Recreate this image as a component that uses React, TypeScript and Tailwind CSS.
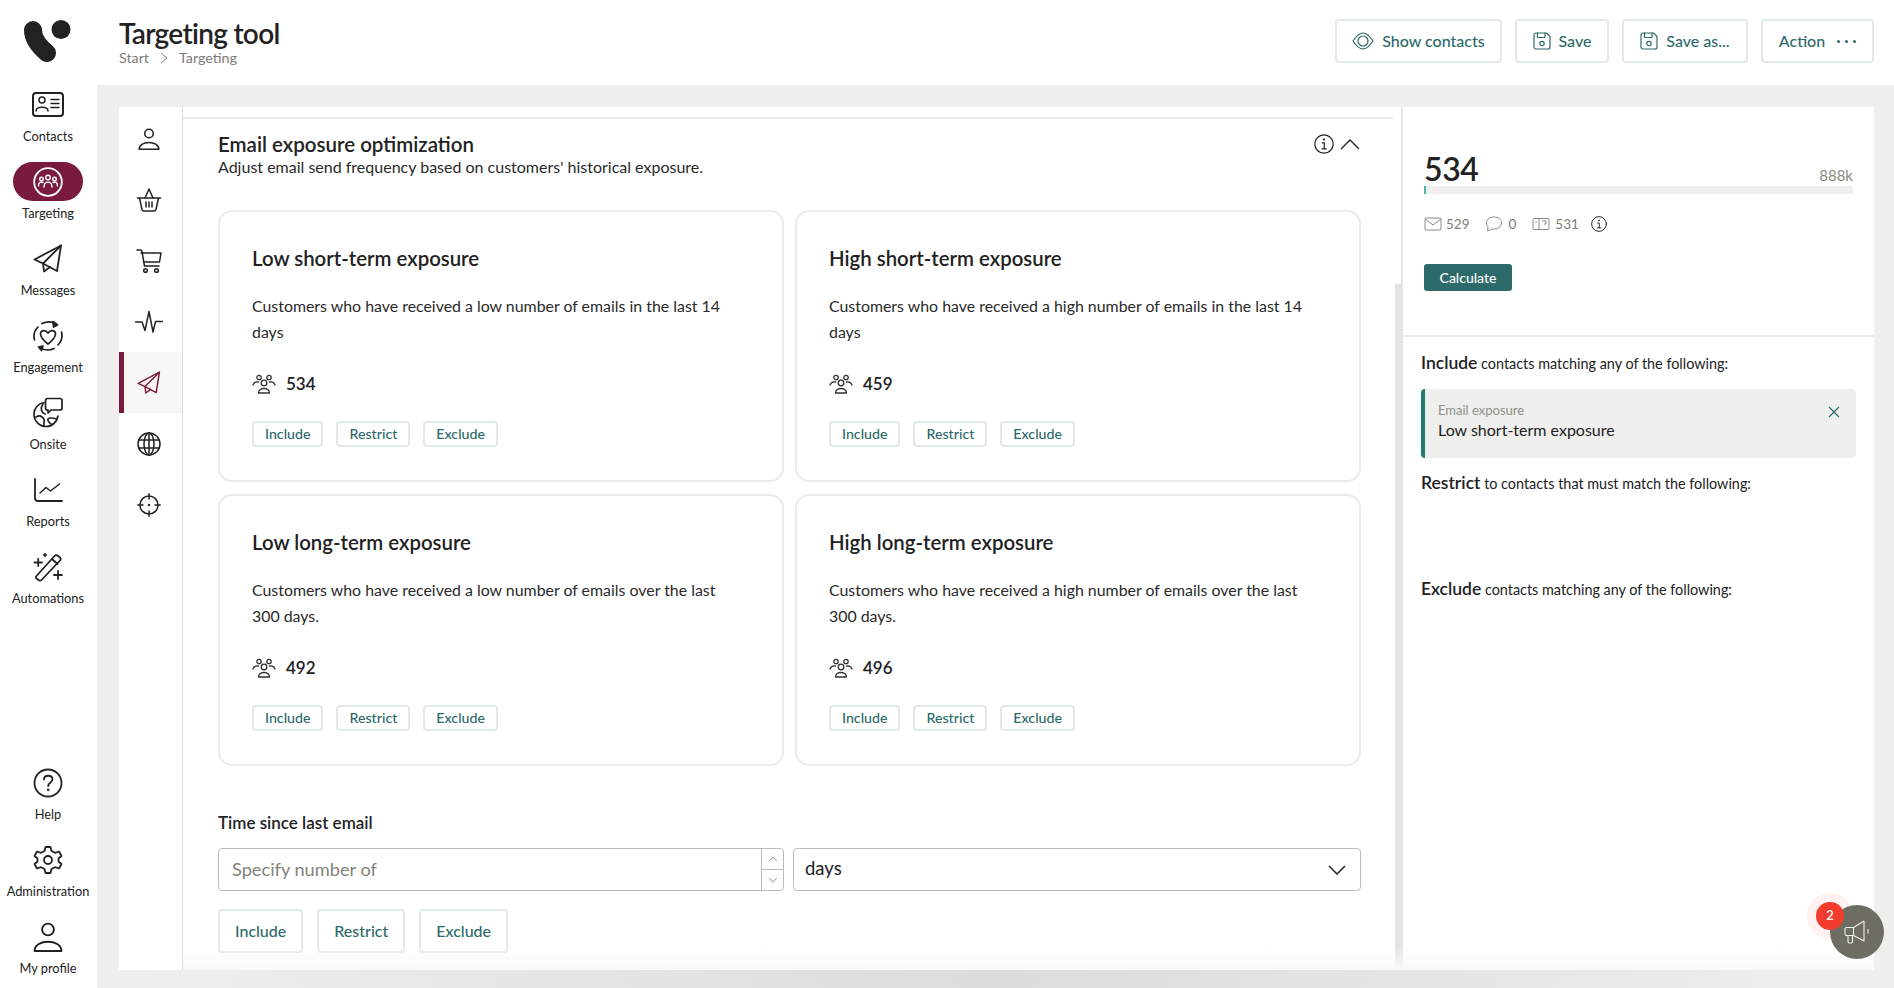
import React from 'react';
import { ChevronDown, ChevronUp } from 'lucide-react';

const ink = '#222222';

const Svg = ({ size, height, stroke = ink, sw = 1.6, children }: { size: number; height?: number; stroke?: string; sw?: number; children: React.ReactNode }) => (
    <svg width={size} height={height ?? size} viewBox={`0 0 ${size} ${height ?? size}`} fill="none" stroke={stroke} strokeWidth={sw} strokeLinecap="round" strokeLinejoin="round">
        {children}
    </svg>
);

const Logo = () => (
    <svg width="48" height="44" viewBox="0 0 48 44" fill="none">
        <path d="M9 10 C9 20 17 28 23 33" stroke="#222" strokeWidth="18" strokeLinecap="round" />
        <circle cx="37" cy="9.500" r="9.500" fill="#222" />
    </svg>
);

const ContactsIcon = () => (
    <Svg size={34} height={27} sw={2}>
        <rect x="2" y="2" width="30" height="23" rx="3" />
        <circle cx="11" cy="9" r="3" strokeWidth="1.5" />
        <path d="M5 20 C5 15 17 15 17 20" strokeWidth="1.5" />
        <path d="M20 8.500 H28 M20 12.500 H28 M20 16.500 H28" strokeWidth="1.5" />
    </Svg>
);

const TargetingIcon = () => (
    <Svg size={30} stroke="#ffffff" sw={1.4}>
        <circle cx="15" cy="15" r="13.800" strokeWidth="1.8" />
        <circle cx="15" cy="10.500" r="2.300" />
        <path d="M11 20 C11 13.500 19 13.500 19 20" />
        <circle cx="8.500" cy="12" r="1.800" />
        <path d="M5.500 19 C5.500 15 8 14.500 10 15.500" />
        <circle cx="21.500" cy="12" r="1.800" />
        <path d="M24.500 19 C24.500 15 22 14.500 20 15.500" />
    </Svg>
);

const PlaneIcon = ({ color = ink, size = 30 }: { color?: string; size?: number }) => (
    <svg width={size} height={size} viewBox="0 0 30 30" fill="none" stroke={color} strokeWidth="1.800" strokeLinejoin="round" strokeLinecap="round">
        <path d="M28 1.500 L1.500 15.500 L10 19.500 L24 27 Z" />
        <path d="M28 1.500 L10 19.500 L11 27.500 L17 23" />
    </svg>
);

const EngagementIcon = () => (
    <Svg size={32} sw={1.7}>
        <path d="M6 7 C2 11 1.500 16 2.500 20 M26 25 C30 21 30.500 16 29.500 12" />
        <path d="M10 3.500 C15 1 20 1.500 24 4" />
        <path d="M8 28 C13 30.500 18 30.500 22 28.500" />
        <path d="M21 1.500 L25.500 5 L21.500 7 Z" fill={ink} />
        <path d="M11 26 L6.500 27 L9.500 30.500 Z" fill={ink} />
        <path d="M16 24 C11 20 8.500 17.500 8.500 14 C8.500 10 13.500 9.500 16 13 C18.500 9.500 23.500 10 23.500 14 C23.500 17.500 21 20 16 24 Z" />
    </Svg>
);

const OnsiteIcon = () => (
    <Svg size={32} sw={1.7}>
        <path d="M12 5.500 C6 6.500 2 11.500 2 17 C2 24 7.500 29.500 14 29.500 C20 29.500 25 25 26 19" />
        <path d="M13 17 C9 15 8 11 11 7 M4 20 C7 18 10 19 12 22 C13 25 11 27 12 29 M25 22 C21 21 18 20 16 22 C15 24 18 26 19 27" />
        <path d="M13.500 3.500 A2 2 0 0 1 15.500 1.500 H28 A2 2 0 0 1 30 3.500 V11 A2 2 0 0 1 28 13 H19 L16 16 V13 H15.500 A2 2 0 0 1 13.500 11 Z" fill="#fff" />
    </Svg>
);

const ReportsIcon = () => (
    <Svg size={30} height={26} sw={1.8}>
        <path d="M2 2 V21 A3 3 0 0 0 5 24 H29" />
        <path d="M7 16 L13 10.500 L17.500 14 L26.500 7" strokeWidth="1.500" />
    </Svg>
);

const WandIcon = () => (
    <Svg size={30} sw={1.8}>
        <path d="M3 24.500 L21.500 4 A2 2 0 0 1 24.500 3.500 L27 5.500 A2 2 0 0 1 27 8.500 L8.500 28 A2 2 0 0 1 5.500 28 L3 26 Z" />
        <path d="M19 7 L24.500 12" />
        <path d="M1.500 10.500 H9 M5.200 7 V14" />
        <path d="M10.500 3 H13.500 M12 1.500 V4.500" strokeWidth="1.500" />
        <path d="M21 23 H29 M25 19 V27" />
    </Svg>
);

const HelpIcon = () => (
    <Svg size={30} sw={1.8}>
        <circle cx="15" cy="15" r="13.500" />
        <path d="M11 11.500 C11 6.500 19.500 6.500 19.500 11.500 C19.500 14.500 15.200 14.500 15.200 18" />
        <circle cx="15.200" cy="21.800" r="0.500" />
    </Svg>
);

const GearIcon = () => (
    <Svg size={30} sw={1.8}>
        <circle cx="15" cy="15" r="4" />
        <path d="M12.500 2 H17.500 L18.500 6 L22 7.800 L26 6.500 L28.500 11 L25.500 13.500 V16.500 L28.500 19 L26 23.500 L22 22.200 L18.500 24 L17.500 28 H12.500 L11.500 24 L8 22.200 L4 23.500 L1.500 19 L4.500 16.500 V13.500 L1.500 11 L4 6.500 L8 7.800 L11.500 6 Z" />
    </Svg>
);

const PersonIcon = ({ size = 28, sw = 1.8 }: { size?: number; sw?: number }) => (
    <svg width={size} height={size} viewBox="0 0 28 28" fill="none" stroke={ink} strokeWidth={sw} strokeLinejoin="round">
        <circle cx="14" cy="7" r="5.500" />
        <path d="M1.500 27 C1.500 15.500 26.500 15.500 26.500 27 Z" />
    </svg>
);

const BasketIcon = () => (
    <Svg size={26} sw={1.500}>
        <path d="M1.500 11 H24.500 M3.500 11 L6 22.500 A2 2 0 0 0 8 24 H18 A2 2 0 0 0 20 22.500 L22.500 11" />
        <path d="M9 11 L13 2 L17 11" />
        <path d="M10 15 V20 M13 15 V20 M16 15 V20" />
    </Svg>
);

const CartIcon = () => (
    <Svg size={26} sw={1.500}>
        <path d="M1 2 H4 A2 2 0 0 1 6 3.500 L8.500 18 H23" />
        <path d="M5 5 H25 L23.500 14 H7.500" />
        <circle cx="9.500" cy="22.500" r="1.800" />
        <circle cx="20.500" cy="22.500" r="1.800" />
    </Svg>
);

const PulseIcon = () => (
    <Svg size={28} height={24} sw={1.500}>
        <path d="M0.500 12 H7 L10 20.500 L14 1.500 L18 22 L20.500 11.500 H27.500" />
    </Svg>
);

const GlobeIcon = () => (
    <Svg size={24} sw={1.500}>
        <circle cx="12" cy="12" r="11" />
        <ellipse cx="12" cy="12" rx="5" ry="11" />
        <path d="M12 1 V23 M1.800 8 H22.200 M1.800 16 H22.200" />
    </Svg>
);

const TargetIcon = () => (
    <Svg size={24} sw={1.500}>
        <circle cx="12" cy="12" r="9" />
        <path d="M12 0.800 V6 M12 18 V23.200 M0.800 12 H6 M18 12 H23.200" />
        <circle cx="12" cy="12" r="0.500" />
    </Svg>
);

const PeopleIcon = () => (
    <Svg size={24} height={20} sw={1.300} stroke="#333">
        <circle cx="7" cy="3.500" r="2.200" />
        <circle cx="17" cy="3.500" r="2.200" />
        <circle cx="12" cy="9" r="2.800" />
        <path d="M6.500 19 C6.500 13 17.500 13 17.500 19 Z" />
        <path d="M1 11 C2 8 4 7.500 6.500 8 M23 11 C22 8 20 7.500 17.500 8" />
    </Svg>
);

const InfoIcon = ({ size = 20 }: { size?: number }) => (
    <svg width={size} height={size} viewBox="0 0 20 20" fill="none" stroke={ink} strokeWidth="1.200" strokeLinecap="round">
        <circle cx="10" cy="10" r="9.200" />
        <path d="M8.200 8.800 H10.300 V14.600 M8 14.800 H12.400" />
        <circle cx="10" cy="5.500" r="0.500" fill={ink} />
    </svg>
);

const EyeIcon = () => (
    <Svg size={22} height={18} stroke="#2d6a6a" sw={1.200}>
        <path d="M1 9 C5 3 8 1 11 1 C14 1 17 3 21 9 C17 15 14 17 11 17 C8 17 5 15 1 9 Z" />
        <circle cx="11" cy="9" r="5" />
    </Svg>
);

const SaveIcon = () => (
    <Svg size={18} stroke="#2d6a6a" sw={1.200}>
        <path d="M1 3 A2 2 0 0 1 3 1 H13.500 L17 4.500 V15 A2 2 0 0 1 15 17 H3 A2 2 0 0 1 1 15 Z" />
        <path d="M4.500 1 V5.500 H12 V1" />
        <circle cx="9" cy="11.500" r="2.200" />
    </Svg>
);

const Megaphone = () => (
    <Svg size={26} stroke="#f2f2ee" sw={1.100}>
        <path d="M1 10 A1.500 1.500 0 0 1 2.500 8.500 H9.500 L20 2 V22 L9.500 16.500 H2.500 A1.500 1.500 0 0 1 1 15 Z" />
        <path d="M9.500 8.500 V16.500 M4 16.500 V22.500 A1.500 1.500 0 0 0 5.500 24 H7 A1.500 1.500 0 0 0 8.500 22.500 V16.500" />
        <path d="M24 10.500 V14" />
    </Svg>
);

const mainNav = [
    { label: 'Contacts', icon: <ContactsIcon /> },
    { label: 'Targeting', icon: <TargetingIcon />, active: true },
    { label: 'Messages', icon: <PlaneIcon /> },
    { label: 'Engagement', icon: <EngagementIcon /> },
    { label: 'Onsite', icon: <OnsiteIcon /> },
    { label: 'Reports', icon: <ReportsIcon /> },
    { label: 'Automations', icon: <WandIcon /> },
];

const bottomNav = [
    { label: 'Help', icon: <HelpIcon /> },
    { label: 'Administration', icon: <GearIcon /> },
    { label: 'My profile', icon: <PersonIcon size={30} /> },
];

const subNav = [
    { key: 'person', icon: <PersonIcon size={22} sw={2} /> },
    { key: 'basket', icon: <BasketIcon /> },
    { key: 'cart', icon: <CartIcon /> },
    { key: 'pulse', icon: <PulseIcon /> },
    { key: 'plane', icon: <PlaneIcon color="#7a1a3f" size={24} />, active: true },
    { key: 'globe', icon: <GlobeIcon /> },
    { key: 'target', icon: <TargetIcon /> },
];

const cards = [
    { title: 'Low short-term exposure', text: 'Customers who have received a low number of emails in the last 14 days', count: 534 },
    { title: 'High short-term exposure', text: 'Customers who have received a high number of emails in the last 14 days', count: 459 },
    { title: 'Low long-term exposure', text: 'Customers who have received a low number of emails over the last 300 days.', count: 492 },
    { title: 'High long-term exposure', text: 'Customers who have received a high number of emails over the last 300 days.', count: 496 },
];

const NavItem = ({ label, icon, active }: { label: string; icon: React.ReactNode; active?: boolean }) => (
    <div className="flex h-[77px] shrink-0 flex-col items-center">
        <div className={`flex h-[39px] w-[70px] items-center justify-center rounded-full ${active ? 'bg-[#7a1a3f]' : ''}`}>{icon}</div>
        <div className="mt-[3px] text-[12.800px] leading-[18px] text-[#222]">{label}</div>
    </div>
);

const SmallButton = ({ label }: { label: string }) => (
    <button className="h-[26px] rounded-[4px] border-2 border-[#e2eae8] px-[11px] text-[14.200px] leading-none font-medium text-[#2d6a6a]">{label}</button>
);

const BigButton = ({ label }: { label: string }) => (
    <button className="h-[44px] rounded-[4px] border-2 border-[#e2eae8] px-[15px] text-[16px] leading-none font-medium text-[#2d6a6a]">{label}</button>
);

const HeaderButton = ({ className, children }: { className: string; children: React.ReactNode }) => (
    <button className={`flex h-[44px] items-center justify-center gap-2 rounded-[4px] border-2 border-[#e2eae8] text-[16px] font-medium text-[#2d6a6a] ${className}`}>
        {children}
    </button>
);

const ExposureCard = ({ title, text, count }: { title: string; text: string; count: number }) => (
    <div className="h-[272px] rounded-[14px] border-2 border-[#e9ecea] pt-[32px] pl-[32px]">
        <h3 className="text-[20.400px] leading-[28px] font-semibold text-[#222]">{title}</h3>
        <p className="mt-[21px] w-[485px] text-[15.900px] leading-[26px] text-[#2a2a2a]">{text}</p>
        <div className="mt-[27px] flex h-[24px] items-center gap-[10px]">
            <PeopleIcon />
            <span className="text-[17px] font-semibold text-[#222]">{count}</span>
        </div>
        <div className="mt-[25px] flex gap-[13px]">
            <SmallButton label="Include" />
            <SmallButton label="Restrict" />
            <SmallButton label="Exclude" />
        </div>
    </div>
);

const RuleHeading = ({ word, rest, className }: { word: string; rest: string; className: string }) => (
    <p className={`pl-[18px] leading-[22px] text-[#222] ${className}`}>
        <span className="text-[17.500px] font-semibold">{word}</span>
        <span className="text-[14.400px]"> {rest}</span>
    </p>
);

export default function App() {
    return (
        <div className="relative flex h-[988px] w-[1894px] overflow-hidden bg-white font-['Lato',sans-serif]">
            <aside className="flex w-[97px] shrink-0 flex-col items-center pr-[1px]">
                <div className="flex h-[85px] w-full shrink-0 items-start justify-center pt-[20px]">
                    <Logo />
                </div>
                {mainNav.map((item) => (
                    <NavItem key={item.label} {...item} />
                ))}
                <div className="mt-auto -mb-[6px] flex flex-col">
                    {bottomNav.map((item) => (
                        <NavItem key={item.label} {...item} />
                    ))}
                </div>
            </aside>

            <div className="flex min-w-0 flex-1 flex-col">
                <header className="flex h-[85px] shrink-0 items-start justify-between pr-[20px] pl-[22px]">
                    <div className="pt-[17px]">
                        <h1 className="text-[28px] leading-[32px] font-semibold tracking-[-0.7px] text-[#222]">Targeting tool</h1>
                        <div className="flex items-center gap-[11px] text-[14.300px] leading-[18px] text-[#7d7d75]">
                            <span>Start</span>
                            <svg width="8" height="12" viewBox="0 0 8 12" fill="none" stroke="#7d7d75" strokeWidth="1"><path d="M1 1 L7 6 L1 11" /></svg>
                            <span>Targeting</span>
                        </div>
                    </div>
                    <div className="flex gap-[13px] pt-[19px]">
                        <HeaderButton className="w-[167px]"><EyeIcon /> Show contacts</HeaderButton>
                        <HeaderButton className="w-[94px]"><SaveIcon /> Save</HeaderButton>
                        <HeaderButton className="w-[126px]"><SaveIcon /> Save as...</HeaderButton>
                        <HeaderButton className="w-[113px] gap-[12px]">
                            Action
                            <span className="flex gap-[5px]">
                                <i className="h-[3px] w-[3px] rounded-full bg-[#2d6a6a]" />
                                <i className="h-[3px] w-[3px] rounded-full bg-[#2d6a6a]" />
                                <i className="h-[3px] w-[3px] rounded-full bg-[#2d6a6a]" />
                            </span>
                        </HeaderButton>
                    </div>
                </header>

                <main className="flex flex-1 flex-col bg-[#efefee] pt-[22px]">
                    <div className="relative ml-[22px] flex h-[863px] w-[1755px] bg-white">
                        <nav className="flex w-[64px] shrink-0 flex-col border-r border-[#dcdcda] pt-[1px]">
                            {subNav.map((item) => (
                                <div
                                    key={item.key}
                                    className={`flex h-[61px] shrink-0 items-center justify-center ${item.active ? 'border-l-[5px] border-[#7a1a3f] bg-[#f7f7f5] pr-[8px]' : 'pr-[3px]'}`}
                                >
                                    {item.icon}
                                </div>
                            ))}
                        </nav>

                        <section className="relative w-[1220px] shrink-0 border-r-2 border-[#e6e6e4]">
                            <div className="mt-[10px] mr-[8px] border-t-2 border-[#ececea]" />
                            <div className="pr-[40px] pl-[35px]">
                                <div className="mt-[14px] flex items-start justify-between">
                                    <div>
                                        <h2 className="text-[20.500px] leading-[23px] font-semibold text-[#222]">Email exposure optimization</h2>
                                        <p className="text-[16px] leading-[21px] text-[#2a2a2a]">Adjust email send frequency based on customers' historical exposure.</p>
                                    </div>
                                    <div className="mr-[1px] flex items-center gap-[6px] pt-[1px]">
                                        <InfoIcon />
                                        <svg width="20" height="11" viewBox="0 0 20 11" fill="none" stroke={ink} strokeWidth="1.300"><path d="M1 10 L10 1 L19 10" /></svg>
                                    </div>
                                </div>

                                <div className="mt-[33px] grid grid-cols-2 gap-x-[11px] gap-y-[12px]">
                                    {cards.map((card) => (
                                        <ExposureCard key={card.title} {...card} />
                                    ))}
                                </div>

                                <h4 className="mt-[45px] text-[17px] leading-[24px] font-semibold text-[#222]">Time since last email</h4>
                                <div className="mt-[13px] flex gap-[9px]">
                                    <div className="flex h-[43px] w-[566px] overflow-hidden rounded-[4px] border-[1.500px] border-[#bdbdb8]">
                                        <input
                                            placeholder="Specify number of"
                                            className="min-w-0 flex-1 pl-[13px] text-[18.200px] outline-none placeholder:text-[#83837b]"
                                        />
                                        <div className="flex w-[22px] flex-col border-l border-[#bdbdb8]">
                                            <div className="flex flex-1 items-center justify-center border-b border-[#bdbdb8]"><ChevronUp size={14} strokeWidth={1} color="#333" /></div>
                                            <div className="flex flex-1 items-center justify-center"><ChevronDown size={14} strokeWidth={1} color="#333" /></div>
                                        </div>
                                    </div>
                                    <div className="flex h-[43px] flex-1 items-center justify-between rounded-[4px] border-[1.500px] border-[#bdbdb8] pr-[14px] pl-[11px]">
                                        <span className="-mt-[2px] text-[18.500px] text-[#222]">days</span>
                                        <svg width="18" height="10" viewBox="0 0 18 10" fill="none" stroke={ink} strokeWidth="1.500"><path d="M1 1 L9 9 L17 1" /></svg>
                                    </div>
                                </div>
                                <div className="mt-[18px] flex gap-[14px]">
                                    <BigButton label="Include" />
                                    <BigButton label="Restrict" />
                                    <BigButton label="Exclude" />
                                </div>
                            </div>
                            <div className="absolute top-[177px] right-0 bottom-0 w-[6px] bg-[#e3e3e3]" />
                        </section>

                        <section className="min-w-0 flex-1">
                            <div className="h-[230px] border-b-2 border-[#eaeaea] pt-[45px] pr-[21px] pl-[21px]">
                                <div className="flex items-end justify-between">
                                    <span className="text-[32px] leading-[34px] font-semibold tracking-[-0.4px] text-[#222]">534</span>
                                    <span className="text-[15px] leading-[22px] text-[#8a8a82]">888k</span>
                                </div>
                                <div className="h-[8px] bg-[#efefee]">
                                    <div className="h-full w-[2px] bg-[#4db6ac]" />
                                </div>
                                <div className="mt-[22px] flex h-[16px] items-center text-[13.500px] text-[#7d7d75]">
                                    <svg width="18" height="14" viewBox="0 0 18 14" fill="none" stroke="#8a8a82" strokeWidth="1"><rect x="1" y="1" width="16" height="12" rx="1" /><path d="M1 2 L9 8 L17 2" /></svg>
                                    <span className="ml-[4px]">529</span>
                                    <svg className="ml-[15px]" width="18" height="16" viewBox="0 0 18 16" fill="none" stroke="#8a8a82" strokeWidth="1"><path d="M9 1 C4.500 1 1.500 3.500 1.500 7 C1.500 8.500 2 9.500 3 10.500 L2.500 15 L7 13 C12.500 13.500 16.500 11 16.500 7 C16.500 3.500 13.500 1 9 1 Z" /><path d="M5.500 7 H6 M8.800 7 H9.300 M12 7 H12.500" /></svg>
                                    <span className="ml-[6px]">0</span>
                                    <svg className="ml-[16px]" width="18" height="14" viewBox="0 0 18 14" fill="none" stroke="#8a8a82" strokeWidth="1"><rect x="1" y="1.500" width="16" height="11" rx="1" /><path d="M7 1.500 V12.500 M3 5 H5 M10 4 H14 V7 H12" /></svg>
                                    <span className="ml-[5px]">531</span>
                                    <span className="ml-[12px] flex"><InfoIcon size={16} /></span>
                                </div>
                                <button className="mt-[32px] h-[27px] w-[88px] rounded-[3px] bg-[#2d6a6a] text-[14px] leading-none font-medium text-white">Calculate</button>
                            </div>
                            <RuleHeading word="Include" rest="contacts matching any of the following:" className="mt-[15px]" />
                            <div className="mt-[14px] mr-[18px] ml-[18px] flex h-[69px] justify-between rounded-[4px] border-l-4 border-[#1f7a70] bg-[#efefee] pr-[16px] pl-[13px]">
                                <div className="pt-[12px]">
                                    <div className="text-[13px] leading-[18px] text-[#8e8e86]">Email exposure</div>
                                    <div className="mt-[1px] text-[16px] leading-[20px] text-[#222]">Low short-term exposure</div>
                                </div>
                                <svg className="mt-[17px]" width="12" height="12" viewBox="0 0 12 12" fill="none" stroke="#2d6a6a" strokeWidth="1.200"><path d="M1 1 L11 11 M11 1 L1 11" /></svg>
                            </div>
                            <RuleHeading word="Restrict" rest="to contacts that must match the following:" className="mt-[14px]" />
                            <RuleHeading word="Exclude" rest="contacts matching any of the following:" className="mt-[83px]" />
                        </section>
                        <div className="pointer-events-none absolute right-0 bottom-0 left-[64px] h-[24px] bg-gradient-to-b from-transparent to-[#f9f9f8]" />
                    </div>
                    <div className="h-[18px] bg-gradient-to-r from-[#efefee] via-[#dcdcda] to-[#efefee]" />
                </main>
            </div>

            <div className="absolute right-[41px] bottom-[49px] h-[46px] w-[46px] rounded-full bg-[#fef1ef]" />
            <div className="absolute right-[10px] bottom-[29px] flex h-[54px] w-[54px] items-center justify-center rounded-full bg-[#6d6d64]">
                <Megaphone />
            </div>
            <div className="absolute right-[50px] bottom-[58px] flex h-[28px] w-[28px] items-center justify-center rounded-full bg-[#f23d2e] text-[13px] font-semibold text-white">2</div>
        </div>
    );
}
